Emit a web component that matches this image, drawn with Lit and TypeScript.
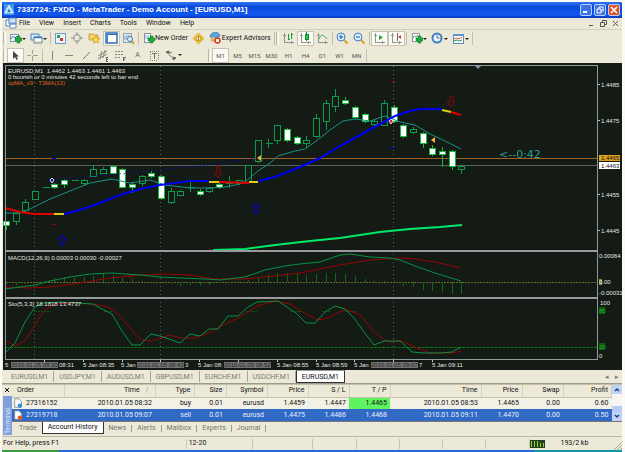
import { LitElement, html, svg, css } from "lit";
import { customElement, state } from "lit/decorators.js";
import { classMap } from "lit/directives/class-map.js";

const chart = svg`<path class="crisp" d="M1 2h8v7h-8z" fill="#fff" stroke="#7a95b0"/><path d="M2 7l2-3 2 2 2-2" stroke="#3a78b0" fill="none"/>`;
const plus = svg`<path d="M6 6h2v-2h3v2h2v3h-2v2h-3v-2h-2z" fill="#18a838" stroke="#0c7a24" stroke-width=".5"/>`;
const axes = svg`<path class="crisp" d="M2 1v9h10M1 3h3M9 9v3" stroke="#8b978f" fill="none"/>`;

const ICONS: Record<string, unknown> = {
  logo: svg`<path class="crisp" d="M1 0h11v12h-11z" fill="#3f9be8"/><path d="M6.500 1.500l4.500 8h-9z" fill="#bfe3fb" stroke="#fff"/><path d="M6.500 5l2 4h-4z" fill="#2676c9"/>`,
  doc: svg`<path d="M1 3h7v6h-7z" fill="#fff" stroke="#4f87c7"/><path d="M4 1h7v6h-7z" fill="#cfe3f7" stroke="#4f87c7"/><path d="M5 6h6v5h-6z" fill="#fff" stroke="#5b90cc"/><path d="M5 7h6" stroke="#3970c0"/>`,
  newChart: svg`${chart}${plus}`,
  profiles: svg`<path d="M1 2h8v6h-8z" fill="#d4e7f9" stroke="#4c83c0"/><path d="M4 5h8v6h-8z" fill="#fff" stroke="#4c83c0"/><path d="M4 5.500h8" stroke="#3878c4" stroke-width="1.500"/><path d="M4.500 10h7" stroke="#e3b64b"/>`,
  market: svg`<path class="crisp" d="M1 1h10v10h-10z" fill="#eaf3fb" stroke="#6d9cc9"/><path d="M3 3h3v3h-3z" fill="#28a745"/><path d="M6 6h3v3h-3z" fill="#d33b2c"/>`,
  target: svg`<circle cx="6" cy="6" r="3.500" fill="none" stroke="#8f9694"/><path d="M6 0v4M6 8v4M0 6h4M8 6h4" stroke="#8f9694"/>`,
  folder: svg`<path d="M1 2h4l1 1h4v5h-9z" fill="#f5d36a" stroke="#b98b22" stroke-width=".7"/><path d="M8 4l1.200 2.300 2.500.3-1.800 1.800.5 2.600-2.400-1.200-2.300 1.200.4-2.600-1.800-1.800 2.500-.3z" fill="#ffe14a" stroke="#c1920d" stroke-width=".7"/>`,
  navigator: svg`<path d="M1 1h11v10h-11z" fill="#fff" stroke="#2f6fb3" stroke-width="1.500"/><path d="M1 1h2v10h-2z" fill="#4a87c8"/><path d="M3 2.500h9" stroke="#2f6fb3"/>`,
  tester: svg`<path class="crisp" d="M1 1h8v9h-8z" fill="#dfe9f2" stroke="#8ba3ba"/><path d="M3 8v-4M5 8v-5M7 6v-3" stroke="#7ca3d0"/><circle cx="8" cy="7" r="2.500" fill="#d9effc" stroke="#587c9c"/><path d="M10 9l2 3" stroke="#c49527" stroke-width="1.500"/>`,
  order: svg`<path class="crisp" d="M2 1h6v9h-6z" fill="#fff" stroke="#84919c"/><path d="M3 4h4M3 6h4" stroke="#79a6cd"/>${plus}`,
  expert: svg`<path d="M1 5c0-6 10-6 10-1l-5 3z" fill="#5ba6e2" stroke="#2c6fa8" stroke-width=".6"/><circle cx="4" cy="7.500" r="2.500" fill="#e6b860"/><circle cx="8.500" cy="8.500" r="3.200" fill="#dd3a1e"/><path class="crisp" d="M7 7h3v3h-3z" fill="#fff"/>`,
  auto: svg`<path d="M6.500 1l5.500 5.500-5.500 5.500-5.500-5.500z" fill="#f7c93c" stroke="#d39f1c" stroke-width=".7"/><circle cx="6.500" cy="6.500" r="2.500" fill="#fff3bd" stroke="#c18f12"/><path d="M6.500 4.500v4" stroke="#9c7412"/>`,
  bars: svg`${axes}<path class="crisp" d="M6 2v6M6 7h2M9 1v6M9 2h2" stroke="#239646" fill="none"/>`,
  candles: svg`${axes}<path class="crisp" d="M7 0v9" stroke="#0f8c30"/><path class="crisp" d="M6 2h3v5h-3z" fill="#2ccc52" stroke="#0f8c30"/>`,
  line: svg`${axes}<path d="M3 7c2-5 4-5 8 0" fill="none" stroke="#35a554"/>`,
  zoomIn: svg`<path d="M8 8l3.500 3.500" stroke="#d8a22a" stroke-width="2"/><circle cx="5" cy="5" r="4" fill="#d8ecfb" stroke="#3f7fbd"/><path d="M5 3v4M3 5h4" stroke="#1d5ca8"/>`,
  zoomOut: svg`<path d="M8 8l3.500 3.500" stroke="#d8a22a" stroke-width="2"/><circle cx="5" cy="5" r="4" fill="#d8ecfb" stroke="#3f7fbd"/><path d="M3 5h4" stroke="#1d5ca8"/>`,
  scroll: svg`${axes}<path d="M6 3l4 2.500-4 2.500z" fill="#22a83e"/>`,
  shift: svg`${axes}<path class="crisp" d="M7 1v8" stroke="#66706a"/><path d="M11 3v4l-3-2z" fill="#d0401e"/>`,
  indicator: svg`<path class="crisp" d="M2 1h7v8h-7z" fill="#fff" stroke="#909a98"/><path d="M3 6c2-5 2 2 5-3" fill="none" stroke="#666"/>${plus}`,
  clock: svg`<circle cx="6" cy="6" r="4.500" fill="#eef7ff" stroke="#3f7cc8" stroke-width="2"/><path d="M6 3v3h2.500" fill="none" stroke="#666"/>`,
  template: svg`<path class="crisp" d="M1 2h10v9h-10z" fill="#fff" stroke="#5e8fc4"/><path class="crisp" d="M1 2h10v2h-10z" fill="#5c94d2"/><path d="M2 7l3-1 2 1 3-2" fill="none" stroke="#cd5a3b"/><path d="M2 9l3-1 2 1 3-1" fill="none" stroke="#2a9548"/>`,
  cursor: svg`<path d="M4 2v8l2-2 1.500 3 1.500-.8-1.500-2.700h2.500z" fill="#444"/>`,
  cross: svg`<path class="crisp" d="M6 1v4M6 7v5M1 6h4M7 6h5" stroke="#a09d8e"/>`,
  vline: svg`<path class="crisp" d="M6 2v9" stroke="#8a887b"/>`,
  hline: svg`<path class="crisp" d="M2 6h8" stroke="#8a887b"/>`,
  trend: svg`<path d="M3 10l7-7" stroke="#77756a"/>`,
  channel: svg`<path d="M1 7l9-5M1 10l9-5M3 10l2-8M6 9l2-8" stroke="#8a887b" fill="none"/><path class="crisp" d="M11 8h-2v4h2M9 10h2" fill="none" stroke="#666"/>`,
  fibo: svg`<path class="crisp" d="M1 2h9M1 5h9M1 8h6" stroke="#8a8778" stroke-dasharray="2 1"/><path class="crisp" d="M9 12v-4h3M9 10h2" fill="none" stroke="#666"/>`,
  label: svg`<path class="crisp" d="M2 2h8v9h-8z" fill="none" stroke="#8a8778" stroke-dasharray="1 1"/><path class="crisp" d="M4 4h5M6.500 4v6" stroke="#77756a"/>`,
  arrows: svg`<path d="M1 3l3-1v3zM8 8l3 1-3 2z" fill="#666" stroke="#666"/><path d="M4 6l3 2M5 4l2-1" stroke="#777"/>`,
  buy: svg`<path d="M2 1h5l3 3v7h-8z" fill="#fff" stroke="#7d8894"/><circle cx="8" cy="9" r="2.500" fill="#2e8fd4"/>`,
  sell: svg`<path d="M2 1h5l3 3v7h-8z" fill="#fff" stroke="#7d8894"/><circle cx="8" cy="9" r="2.500" fill="#e8501c"/>`,
};

const icon = (name: string) =>
  html`<svg class="icon" viewBox="0 0 13 13" aria-hidden="true">${ICONS[name]}</svg>`;

// Price bars: [body top, body bottom, wick top, wick bottom, filled]
const BARS: [number, number, number, number, number][] = [
  [221, 225, 221, 229, 1], [213, 221, 211, 224, 0], [202, 210, 199, 211, 0], [191, 199, 191, 199, 0],
  [187, 187, 187, 187, 0], [184, 187, 183, 188, 1], [180, 184, 179, 187, 1], [180, 180, 180, 180, 0],
  [180, 183, 179, 184, 0], [169, 176, 165, 176, 0], [169, 173, 167, 173, 0], [166, 173, 165, 173, 1],
  [169, 187, 168, 187, 1], [184, 187, 182, 192, 1], [176, 183, 175, 185, 0], [173, 176, 171, 177, 1],
  [176, 198, 175, 199, 1], [191, 202, 188, 203, 0], [191, 195, 190, 195, 0], [187, 187, 182, 191, 0],
  [191, 194, 189, 195, 1], [188, 191, 185, 192, 0], [188, 191, 187, 192, 0], [184, 187, 182, 188, 1],
  [182, 183, 176, 187, 0], [180, 183, 180, 184, 0], [165, 182, 165, 182, 0], [140, 161, 140, 162, 0],
  [143, 143, 139, 147, 0], [125, 140, 125, 143, 0], [129, 140, 128, 141, 1], [137, 143, 136, 144, 1],
  [140, 143, 136, 147, 0], [118, 136, 114, 137, 0], [103, 121, 100, 129, 0], [96, 106, 89, 111, 0],
  [100, 103, 97, 104, 1], [107, 117, 106, 118, 1], [114, 121, 113, 122, 1], [121, 124, 120, 125, 0],
  [103, 125, 100, 125, 0], [107, 121, 105, 122, 1], [125, 136, 124, 137, 1], [129, 132, 127, 133, 0],
  [133, 143, 132, 147, 1], [148, 154, 145, 155, 1], [151, 154, 147, 166, 1], [151, 166, 150, 169, 1],
  [166, 169, 165, 173, 0],
].filter((_, i) => i !== 21) as [number, number, number, number, number][];
// Height of each MACD column; negative values hang below the zero line
const MACD = [
  -2, -3, -2, -1, 1, 4, 5, 4, 5, 6, 8, 7, 4, 3, 1, -1, -1, -2, -4, -3, -4, -3, -1, -1,
  1, 2, 5, 7, 9, 9, 8, 7, 8, 9, 9, 8, 6, 3, 1, 1, 1, -4, -5, -8, -9, -10, -12, -12,
];
const barX = (i: number) => 6 + Math.round(i * 9.69);

const PRICES: [string, number][] = [["1.4485", 85], ["1.4475", 121], ["1.4455", 195], ["1.4445", 231]];
const TICKS = [44, 83, 122, 160, 199, 238, 277, 316, 354, 393, 432];
// Time labels in the stretches that the highlighted session stamps leave free
const TIMES: [string, number][] = [
  ["5", 5], ["08:31", 59], ["5 Jan 08:35", 83], ["5 Jan", 121], ["3", 185], ["5 Jan 08:", 198],
  ["5 Jan 08:55", 277], ["5 Jan 08:59", 316], ["5 Jan", 354], ["7", 419], ["5 Jan 09:11", 432],
];
const MARKS: [string, number][] = [
  ["2010.01.05 08:30", 11], ["2010.01.05 08:43", 137], ["2010.01.05 08:52", 224], ["2010.01.05 09:07", 371],
];
const LINES: [string, string][] = [
  ["teal", "5,213 20,213 30,209 50,199 70,191 90,183 112,179 130,183 150,180 165,185 190,188 205,188 225,187 240,184 246,181 258,171 270,163 278,156 295,151 305,149 315,142 330,130 343,121 355,119 370,121 385,116 400,122 415,125 430,134 445,141 461,149"],
  ["ma red", "5,208 20,212 35,214 54,214"],
  ["ma yellow", "54,214 64,214"],
  ["ma blue", "64,214 80,210 100,203 120,195 140,189 160,185 175,183 190,181 209,181"],
  ["ma yellow", "209,182 219,182"],
  ["ma red", "219,182 249,183"],
  ["ma yellow", "249,182 258,182"],
  ["ma blue", "258,181 275,177 300,167 320,158 340,146 360,135 380,124 395,116 410,111 420,109 442,109"],
  ["ma yellow", "442,110 451,112"],
  ["ma red", "451,112 461,115"],
  ["slow", "213,250 245,249 275,245 310,241 340,238 380,232 410,229 440,227 462,225"],
  ["trade", "52,180 130,173 209,165 258,158"],
  ["osc-red", "5,287 30,288 50,287 80,283 110,278 140,275 165,274 190,275 215,279 245,279 265,277 300,273 340,265 370,260 400,258 415,259 435,262 461,268"],
  ["osc-green", "5,289 20,287 35,285 50,281 70,277 90,274 112,273 125,274 140,275 160,277 180,278 205,279 220,280 245,277 265,270 285,266 300,264 320,262 340,255 350,254 370,257 390,258 400,260 415,266 435,273 461,281"],
  ["osc-red", "5,340 15,346 25,341 35,325 44,311 54,304 75,303 90,304 105,306 115,311 125,322 135,334 142,340 151,341 170,335 180,338 195,338 209,333 225,324 240,317 257,306 275,301 290,304 306,314 318,320 328,318 345,309 360,315 375,333 388,342 402,341 415,347 430,353 452,353 461,351"],
  ["osc-green", "5,353 15,343 25,322 35,307 44,303 60,302 93,304 102,309 112,314 122,331 132,345 140,345 151,334 160,336 172,340 180,343 190,334 200,336 209,329 218,329 228,316 238,316 248,307 257,302 278,301 287,307 296,313 306,323 315,323 325,312 335,306 345,309 354,318 364,332 374,345 384,341 400,341 412,352 425,353 440,353 452,352 461,347"],
];

@customElement("chart-view")
class ChartView extends LitElement {
  static styles = css`
    :host { display: block; background: #141a14; border-left: 1px solid #ece9d8; }
    svg { display: block; width: 100%; font-family: "Liberation Sans", Arial, sans-serif; font-size: 6px; fill: #e4e6e4; }
    .plot { shape-rendering: crispEdges; fill: none; }
    .frame { stroke: #8d9a9e; }
    .split { stroke: #9a9a9e; stroke-width: 2; }
    .session { stroke: #5d655d; stroke-dasharray: 1 3; }
    .order { stroke: #a06224; }
    .bid { stroke: #5a605c; }
    .zero { stroke: #6a6a2c; stroke-dasharray: 2 1; }
    .level { stroke: #087a08; stroke-dasharray: 3 1; }
    .level-part { stroke: #07560c; stroke-dasharray: 2 1; }
    .up { stroke: #0b9a4e; fill: #141a14; }
    .down { stroke: #14b83c; fill: #fff; }
    .hist { stroke: #0b6c12; }
    .curve { fill: none; }
    .teal { stroke: #1b9088; }
    .ma { stroke-width: 2; }
    .red { stroke: #e00000; }
    .blue { stroke: #0000f4; }
    .yellow { stroke: #d8d010; }
    .slow { stroke: #00e868; stroke-width: 2; }
    .trade { stroke: #0000f0; stroke-dasharray: 1 3; }
    .osc-red { stroke: #940606; }
    .osc-green { stroke: #089048; }
    .arrow-up { fill: none; stroke: #0000e0; }
    .arrow-down { fill: none; stroke: #900606; }
    .tick { stroke: #c4c8c4; }
    .orange { fill: #e0661c; }
    .note { fill: #2b9c94; font-family: "DejaVu Sans", sans-serif; font-size: 11px; }
    .tag-order { fill: #dca01c; }
    .tag-bid { fill: #fff; }
    .tag-text { fill: #111; }
    .mark { fill: #737373; }
    .mark-text { fill: #222; }
    .pin { fill: #f0b040; }
    .deal-buy { fill: #0000f0; stroke: #ddd; }
    .deal-sell { fill: #e02020; stroke: #c8dcf0; }
    .shift { fill: #7d8fae; }
    .level-tag { fill: #075f0c; }
    .level-text { fill: #25b235; }
    .zero-tag { fill: #8c8c30; }
  `;

  render() {
    return html`<svg viewBox="3 63 619 307" role="img" aria-label="EURUSD one minute chart">
      <g class="plot">
        ${[34.5, 160.5, 393.5].map((x) => svg`<path class="session" d="M${x} 66V359"/>`)}
        <path class="order" d="M6 158.500H597"/>
        <path class="bid" d="M6 165.500H597"/>
        <path class="zero" d="M6 282.500H597"/>
        <path class="level" d="M6 347.500H597"/>
        <path class="level-part" d="M35 311.500H51M104 311.500H113M246 311.500H257M290 311.500H301M322 311.500H330M343 311.500H356"/>
        ${MACD.map((h, i) => svg`<path class="hist" d="M${barX(i) + 0.5} 282V${282 - h}"/>`)}
        ${BARS.map(([top, bottom, high, low, filled], i) => {
          const x = barX(i) + 0.5;
          return svg`<g class=${filled ? "down" : "up"}><path d="M${x} ${high}V${low + 1}"/>
            <rect x=${x - 3} y=${top + 0.5} width="6" height=${bottom - top}/>${top === bottom ? svg`<path d="M${x - 3} ${top + 0.5}h7"/>` : ""}</g>`;
        })}
      </g>
      <g class="curve">${LINES.map(([kind, points]) => svg`<polyline class=${kind} points=${points}/>`)}</g>
      <path class="arrow-up" d="M58 239l4-4 4 4h-2v6h-4v-6zM252 207l4-4 4 4h-2v6h-4v-6z"/>
      <path class="arrow-down" d="M217 166h3v7h2l-4 5-4-5h3zM450 96h3v6h2l-4 5-4-5h3z"/>
      <g class="plot"><path class="osc-red" d="M52 224.500h4M391 81.500h5"/><path class="blue" d="M52 158.500h4M391 147.500h4"/></g>
      <path class="pin" d="M257 158l4-3v6zM431 140l4-3v6z"/>
      <path class="deal-buy" d="M52 178l2 2-2 3-2-3z"/>
      <path class="deal-sell" d="M391 119l2 2-2 3-2-3z"/>
      <path class="shift" d="M475 66h6l-3 3z"/>
      <g class="plot">
        <path class="frame" d="M5.500 359V65.500H597.500V359.500H5"/>
        <path class="split" d="M5 251H598M5 298H598"/>
        <path class="tick" d="${PRICES.map(([, y]) => `M598 ${y - 0.5}h2`).join("")}${TICKS.map((x) => `M${x + 0.5} 360v2`).join("")}"/>
      </g>
      <text x="8" y="73">EURUSD,M1&#160; 1.4462 1.4463 1.4461 1.4463</text>
      <text x="8" y="79">0 hourish or 0 minutes 42 seconds left to bar end</text>
      <text x="8" y="85" class="orange">xpMA_v9 - T3MA(13)</text>
      <text x="8" y="260">MACD(12,26,9) 0.00003 0.00030 -0.00027</text>
      <text x="8" y="306">Sto(5,3,3) 18.1818 13.4737</text>
      <text x="499" y="158" class="note">&lt;--0:42</text>
      ${PRICES.map(([label, y]) => svg`<text x="601" y=${y + 2}>${label}</text>`)}
      <rect x="599" y="155" width="21" height="6" class="tag-order"/><text x="601" y="160" class="tag-text">1.4465</text>
      <rect x="599" y="162" width="21" height="7" class="tag-bid"/><text x="601" y="168" class="tag-text">1.4463</text>
      <text x="599" y="258">0.00064</text>
      <rect x="599" y="279" width="3" height="6" class="zero-tag"/><text x="599" y="284">0.00</text>
      <text x="599" y="295">-0.00031</text>
      <text x="600" y="305">100</text><text x="599" y="358">0</text>
      <rect x="599" y="307" width="6" height="7" class="level-tag"/><text x="599" y="313" class="level-text">80</text>
      <rect x="599" y="343" width="6" height="7" class="level-tag"/><text x="599" y="349" class="level-text">20</text>
      ${TIMES.map(([t, x]) => svg`<text x=${x} y="367">${t}</text>`)}
      ${MARKS.map(([t, x]) => svg`<rect x=${x} y="362" width="47" height="6" class="mark"/><text x=${x} y="367" class="mark-text">${t}</text>`)}
    </svg>`;
  }
}

const MENU = ["File", "View", "Insert", "Charts", "Tools", "Window", "Help"];
const PERIODS = ["M1", "M5", "M15", "M30", "H1", "H4", "D1", "W1", "MN"];
const SYMBOLS = ["EURUSD,M1", "USDJPY,M1", "AUDUSD,M1", "GBPUSD,M1", "EURCHF,M1", "USDCHF,M1", "EURUSD,M1"];
const PANES = ["Trade", "Account History", "News", "Alerts", "Mailbox", "Experts", "Journal"];
const COLUMNS = ["Order", "Time", "Type", "Size", "Symbol", "Price", "S / L", "T / P", "Time", "Price", "Swap", "Profit"];
const DEALS = [
  ["27316152", "2010.01.05 08:32", "buy", "0.01", "eurusd", "1.4459", "1.4447", "1.4465", "2010.01.05 08:53", "1.4465", "0.00", "0.60"],
  ["27319718", "2010.01.05 09:07", "sell", "0.01", "eurusd", "1.4475", "1.4486", "1.4468", "2010.01.05 09:11", "1.4470", "0.00", "0.50"],
];

@customElement("app-root")
class AppRoot extends LitElement {
  @state() private period = "M1";
  @state() private symbol = 6;
  @state() private pane = 1;
  @state() private deal = 1;

  static styles = css`
    :host { display: block; padding: 2px 3px 0 2px; background: #fbfaf4; color: #111; font: 7px/9px Roboto, "Liberation Sans", sans-serif; }
    * { box-sizing: border-box; }
    button { font: inherit; color: inherit; background: none; border: 0; padding: 0; margin: 0; white-space: nowrap; }
    .window { background: #ece9d8; }
    .icon { width: 13px; height: 13px; flex: none; display: block; }
    .crisp { shape-rendering: crispEdges; }
    .bar { display: flex; align-items: center; }
    .grow { flex: 1; }
    .title { height: 16px; padding: 0 2px 0 1px; gap: 2px; color: #fff; background: linear-gradient(#2f77f2, #0b48dc 30%, #1058ee 80%, #0836b8); }
    .title h1 { margin: 0; flex: 1; font: bold 8px/12px "Liberation Sans", Arial, sans-serif; white-space: nowrap; }
    .title .icon { width: 12px; height: 12px; }
    .win { width: 12px; height: 12px; border: 1px solid #b9cff8; border-radius: 2px; background: #3c73e6; display: grid; place-items: center; }
    .win svg { width: 8px; height: 8px; display: block; }
    .close { background: #e2552c; }
    .menu { height: 12px; padding: 0 3px; gap: 9px; border-bottom: 1px solid #d4cfb8; }
    .menu .mdi { gap: 5px; color: #555; }
    .mdi svg { width: 7px; height: 7px; display: block; }
    .menu .icon { margin-right: -8px; }
    .tools { height: 17px; padding-left: 1px; }
    .lower { height: 16px; }
    .grip { width: 3px; height: 13px; margin-right: 1px; border-left: 1px solid #bdb89f; border-right: 1px solid #fff; }
    .spaced { margin-left: 24px; }
    .sep { width: 1px; height: 13px; margin: 0 1px; background: #c4bfa8; }
    .tool { display: flex; align-items: center; justify-content: center; width: 17px; height: 15px; flex: none; border: 1px solid transparent; }
    .wide { width: auto; padding: 0 1px; }
    .drop { width: 21px; }
    .drop::after { content: ""; border: 2px solid transparent; border-top-color: #222; border-bottom: 0; }
    .on { background: #fbfaf5; border-color: #c9c4b0; }
    .time { color: #55534b; font-size: 6px; }
    .letter { color: #66645c; }
    .tabs { height: 14px; padding-left: 4px; border-bottom: 1px solid #9c9a8c; color: #7c7a70; }
    .tabs button { padding: 0 5px; height: 11px; font-size: 7px; border-right: 1px solid #a8a594; line-height: 10px; }
    .tabs .picked, .panes .picked { background: #fff; color: #111; border: 1px solid #333; border-top-color: #999; }
    .tabs .picked { height: 13px; align-self: flex-start; }
    .tabs .nav { border: 0; padding: 0 3px; }
    .terminal { display: flex; height: 51px; border-top: 1px solid #c4bfa8; }
    .side { width: 10px; flex: none; display: flex; flex-direction: column; align-items: center; gap: 3px; }
    .side svg { width: 6px; height: 6px; margin-top: 2px; }
    .side h2 { flex: 1; width: 9px; margin: 0; padding: 1px 0; font: 7px/9px "Liberation Sans", sans-serif; color: #dce7fc; background: #7f9fdc; writing-mode: vertical-rl; transform: rotate(180deg); }
    .panel { flex: 1; min-width: 0; }
    .grid { display: flex; }
    table { flex: 1; width: 0; border-collapse: collapse; table-layout: fixed; background: #f3f1e6; }
    th, td { padding: 0 3px 0 0; text-align: right; font-weight: normal; white-space: nowrap; overflow: hidden; }
    th { height: 12px; background: #ece9d8; border-bottom: 1px solid #c8c3ae; border-right: 1px solid #d6d1bd; }
    td { height: 12px; }
    tr > :first-child { text-align: left; padding-left: 5px; }
    td .cell { display: flex; align-items: center; gap: 2px; }
    td .cell .icon { width: 11px; height: 11px; margin-left: -4px; }
    .sort { color: #999; margin: 0 3px 0 6px; }
    .c-order { width: 52px; }
    .c-time { width: 91px; }
    .c-type { width: 39px; }
    .c-size { width: 32px; }
    .c-mid { width: 41px; }
    .hit { background: #5ff45f; }
    .chosen { background: #316ac5; color: #e8f0ff; }
    .scroll { width: 10px; flex: none; display: flex; flex-direction: column; justify-content: space-between; background: #f6f5f0; }
    .scroll button { height: 9px; background: #c2d3fa; display: grid; place-items: center; border-radius: 1px; }
    .scroll svg { width: 6px; height: 5px; }
    .thumb { flex: 1; margin-top: 12px; background: #b9cbf6; }
    .panes { height: 13px; padding-left: 2px; align-items: flex-start; color: #77756a; border-top: 1px solid #777; }
    .panes button { height: 12px; padding: 0 5px; }
    .panes .picked { border-top: 0; }
    .pipe { width: 1px; height: 7px; margin-top: 3px; background: #a09d8e; }
    .status { height: 14px; margin-top: 1px; border-top: 1px solid #bdb8a2; }
    .status span { height: 10px; border-right: 1px solid #c9c4ae; }
    .status .help { flex: 186 0 0; padding-left: 1px; }
    .status .profile { flex: 65 0 0; padding-left: 2px; }
    .status .slot { flex: 60 0 0; }
    .status .short { flex: 43 0 0; }
    .status .net { flex: 85 0 0; border: 0; display: flex; align-items: center; gap: 16px; }
    .net svg { width: 15px; height: 8px; }
    .grip-end { width: 9px; height: 9px; align-self: flex-end; }
    .taskbar { display: flex; height: 2px; background: #2468e0; }
    .start { width: 57px; background: #3a9a3c; }
    .tray { width: 88px; background: #139aa0; }
  `;

  private tool(name: string, label: string, extra: Record<string, boolean> = {}) {
    return html`<button class=${classMap({ tool: true, ...extra })} aria-label=${label}>${icon(name)}</button>`;
  }

  render() {
    const sep = html`<div class="sep"></div>`;
    const grip = html`<div class="grip"></div>`;
    return html`
      <main class="window">
        <header class="bar title">
          ${icon("logo")}
          <h1>7337724: FXDD - MetaTrader - Demo Account - [EURUSD,M1]</h1>
          <button class="win" aria-label="Minimize"><svg viewBox="0 0 8 8"><path d="M1 6h4" stroke="#fff" stroke-width="2"/></svg></button>
          <button class="win" aria-label="Restore"><svg viewBox="0 0 8 8"><path d="M3 3v-2h4v4h-2M1 3h4v4h-4z" stroke="#fff" fill="none"/></svg></button>
          <button class="win close" aria-label="Close"><svg viewBox="0 0 8 8"><path d="M1 1l6 6M7 1l-6 6" stroke="#fff" stroke-width="1.500"/></svg></button>
        </header>
        <nav class="bar menu">
          ${icon("doc")}
          ${MENU.map((m) => html`<button>${m}</button>`)}
          <div class="grow"></div>
          <div class="bar mdi">
            <button aria-label="Minimize chart"><svg viewBox="0 0 7 7"><path d="M1 5.500h4" stroke="#555"/></svg></button>
            <button aria-label="Restore chart"><svg viewBox="0 0 7 7"><path d="M2.500 2.500v-2h4v4h-2M.5 2.500h4v4h-4z" stroke="#555" fill="none"/></svg></button>
            <button aria-label="Close chart"><svg viewBox="0 0 7 7"><path d="M1 1l5 5M6 1l-5 5" stroke="#555"/></svg></button>
          </div>
        </nav>
        <div class="bar tools" role="toolbar" aria-label="Standard">
          ${grip}${this.tool("newChart", "New chart", { drop: true })}${this.tool("profiles", "Profiles", { drop: true })}
          ${sep}${this.tool("market", "Market watch")}${this.tool("target", "Data window")}${this.tool("folder", "Navigator")}${this.tool("navigator", "Terminal", { on: true })}${this.tool("tester", "Strategy tester")}
          ${sep}<button class="tool wide">${icon("order")}New Order</button>${this.tool("auto", "MetaEditor")}
          <button class="tool wide">${icon("expert")}Expert Advisors</button>
          ${sep}${grip}${this.tool("bars", "Bar chart")}${this.tool("candles", "Candlesticks", { on: true })}${this.tool("line", "Line chart")}
          ${sep}${this.tool("zoomIn", "Zoom in")}${this.tool("zoomOut", "Zoom out")}
          ${sep}${this.tool("scroll", "Auto scroll", { on: true })}${this.tool("shift", "Chart shift", { on: true })}
          ${sep}${this.tool("indicator", "Indicators", { drop: true })}${this.tool("clock", "Periods", { drop: true })}${this.tool("template", "Templates", { drop: true })}
          ${sep}
        </div>
        <div class="bar tools lower" role="toolbar" aria-label="Line studies">
          ${grip}${this.tool("cursor", "Cursor", { on: true })}${this.tool("cross", "Crosshair")}
          ${sep}${this.tool("vline", "Vertical line")}${this.tool("hline", "Horizontal line")}${this.tool("trend", "Trendline")}${this.tool("channel", "Channel")}${this.tool("fibo", "Fibonacci")}
          <button class="tool letter" aria-label="Text">A</button>${this.tool("label", "Text label")}${this.tool("arrows", "Arrows", { drop: true })}
          <div class="grip spaced"></div>
          ${PERIODS.map((p) => html`<button class=${classMap({ tool: true, time: true, on: p === this.period })} @click=${() => (this.period = p)}>${p}</button>`)}
          ${sep}
        </div>
        <chart-view></chart-view>
        <nav class="bar tabs">
          ${SYMBOLS.map((s, i) => html`<button class=${classMap({ picked: i === this.symbol })} @click=${() => (this.symbol = i)}>${s}</button>`)}
          <div class="grow"></div>
          <button class="nav" aria-label="Previous tab">◂</button><button class="nav" aria-label="Next tab">▸</button>
        </nav>
        <section class="terminal">
          <div class="side">
            <svg viewBox="0 0 6 6"><path d="M1 1l4 4M5 1l-4 4" stroke="#111"/></svg>
            <h2>Terminal</h2>
          </div>
          <div class="panel">
            <div class="grid">
              <table>
                <colgroup>
                  <col class="c-order" /><col class="c-time" /><col class="c-type" /><col class="c-size" />
                  <col class="c-mid" /><col class="c-mid" /><col class="c-mid" /><col class="c-mid" />
                  <col class="c-time" /><col class="c-mid" /><col class="c-mid" /><col />
                </colgroup>
                <thead><tr>${COLUMNS.map((c, i) => html`<th scope="col">${c}${i === 1 ? html`<span class="sort">/</span>` : ""}</th>`)}</tr></thead>
                <tbody>
                  ${DEALS.map((row, r) => html`<tr class=${classMap({ chosen: r === this.deal })} @click=${() => (this.deal = r)}>
                    ${row.map((v, i) => html`<td class=${classMap({ hit: i === 7 && v === row[9] })}>${i === 0 ? html`<div class="cell">${icon(row[2])}${v}</div>` : v}</td>`)}
                  </tr>`)}
                </tbody>
              </table>
              <div class="scroll">
                <button aria-label="Scroll up"><svg viewBox="0 0 6 5"><path d="M1 4l2-2 2 2" fill="none" stroke="#26427c" stroke-width="1.500"/></svg></button>
                <div class="thumb"></div>
                <button aria-label="Scroll down"><svg viewBox="0 0 6 5"><path d="M1 1l2 2 2-2" fill="none" stroke="#26427c" stroke-width="1.500"/></svg></button>
              </div>
            </div>
            <nav class="bar panes">
              ${PANES.map((p, i) => html`<button class=${classMap({ picked: i === this.pane })} @click=${() => (this.pane = i)}>${p}</button>${i > 1 ? html`<div class="pipe"></div>` : ""}`)}
            </nav>
          </div>
        </section>
        <footer class="bar status">
          <span class="help">For Help, press F1</span><span class="profile">12-20</span>
          <span class="slot"></span><span class="short"></span><span class="short"></span><span class="short"></span><span class="short"></span><span class="short"></span>
          <span class="net"><svg viewBox="0 0 15 8"><path class="crisp" d="M0 0h15v8H0z" fill="#23401c"/><path class="crisp" d="M1.500 1v6M4.500 1v6M7.500 1v6M10.500 3v4M13.500 3v4" stroke="#9fd32c"/></svg>193/2 kb</span>
          <svg class="grip-end" viewBox="0 0 9 9"><path d="M1 9l8-8M4 9l5-5M7 9l2-2" stroke="#a9a592"/></svg>
        </footer>
        <div class="taskbar"><div class="start"></div><div class="grow"></div><div class="tray"></div></div>
      </main>
    `;
  }
}
